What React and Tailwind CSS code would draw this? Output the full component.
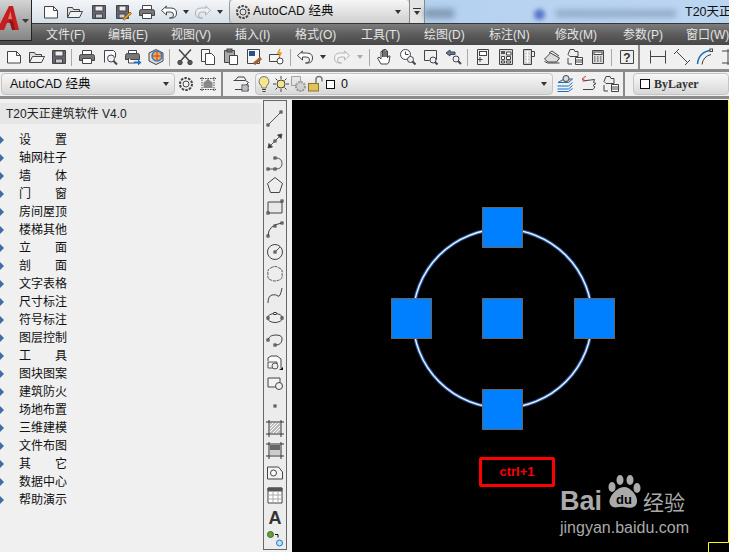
import React from 'react';

const CJK = "font-['Liberation_Sans','Noto_Sans_CJK_SC',sans-serif]";

const menus = [
  ['文件(F)', 62], ['编辑(E)', 63], ['视图(V)', 64], ['插入(I)', 60], ['格式(O)', 66],
  ['工具(T)', 63], ['绘图(D)', 65], ['标注(N)', 66], ['修改(M)', 68], ['参数(P)', 63], ['窗口(W)', 60],
];

const sideItems = [
  ['设', '置'], ['轴网柱子'], ['墙', '体'], ['门', '窗'], ['房间屋顶'], ['楼梯其他'], ['立', '面'], ['剖', '面'],
  ['文字表格'], ['尺寸标注'], ['符号标注'], ['图层控制'], ['工', '具'], ['图块图案'], ['建筑防火'], ['场地布置'],
  ['三维建模'], ['文件布图'], ['其', '它'], ['数据中心'], ['帮助演示'],
];

// every toolbar icon sits in an 18 unit box
function Ico({ children, size = 18 }) {
  return (
    <svg viewBox="0 0 18 18" width={size} height={size} fill="none" stroke="#444" strokeWidth="1" className="shrink-0">
      {children}
    </svg>
  );
}

const New = () => <Ico><path d="M2.500 3.500h9l4 4v7.500h-13z" fill="#fafafa" /><path d="M11.500 3.500v4h4" /></Ico>;
const Open = () => <Ico><path d="M1.500 14.500v-10h5l1 2h6v2" fill="#ddd" /><path d="M1.500 14.500l3-6h12l-3 6z" fill="#f2f2f2" /></Ico>;
const Save = () => <Ico><path d="M2.500 2.500h13v13h-13z" fill="#667" /><rect x="5" y="3" width="8" height="5" fill="#eee" /><rect x="5.500" y="11" width="7" height="4" fill="#ccc" /></Ico>;
const SaveAs = () => <Ico><path d="M2.500 2.500h12v13h-12z" fill="#667" /><rect x="5" y="3" width="7" height="5" fill="#eee" /><rect x="5" y="11" width="6" height="4" fill="#ccc" /><path d="M9 16l7-7 1.500 1.500-7 6.500z" fill="#e8a93a" stroke="#a06a10" /></Ico>;
const Print = () => <Ico><path d="M4.500 6.500v-4h9v4" fill="#fff" /><path d="M1.500 12.500v-4q0-2 2-2h11q2 0 2 2v4z" fill="#777" /><path d="M4.500 10.500h9v5h-9z" fill="#fff" /></Ico>;
const Preview = () => <Ico><path d="M3.500 14.500v-12h9l2 2v5" fill="#fafafa" /><circle cx="10" cy="10.500" r="3.500" fill="#eef" /><path d="M12.500 13l3.500 3.500" strokeWidth="2" /></Ico>;
const Plot = () => <Ico><path d="M4.500 5.500v-3h8v3" fill="#fff" /><path d="M1.500 11.500v-4q0-2 2-2h10q2 0 2 2v4z" fill="#777" /><path d="M4.500 10v5h6" fill="#fff" /><path d="M10 13.500h4v-2l3.500 3-3.500 3v-2h-4z" fill="#1b6fc0" stroke="none" /></Ico>;
const Publish = () => <Ico><path d="M9 1.500l7 3.500v8l-7 3.500-7-3.500v-8z" fill="#ddd" /><circle cx="10" cy="8" r="5" fill="#e9ad4a" stroke="#2a80c8" strokeWidth="1.500" /><path d="M10 3v10M5 8h10" stroke="#d33" /></Ico>;
const Cut = () => <Ico><path d="M3 1.500l10 11M15 1.500l-10 11" strokeWidth="1.500" /><circle cx="4" cy="14.500" r="2.200" fill="#555" /><circle cx="14" cy="14.500" r="2.200" fill="#555" /></Ico>;
const Copy = () => <Ico><path d="M2.500 1.500h8v12h-8z" fill="#fafafa" /><path d="M6.500 5.500h6l3 3v8h-9z" fill="#fff" /></Ico>;
const Paste = () => <Ico><path d="M2.500 2.500h10v12h-10z" fill="#aaa" /><rect x="5" y="1" width="5" height="3" fill="#777" /><path d="M7.500 7.500h8v9h-8z" fill="#fff" /></Ico>;
const Match = () => <Ico><path d="M2.500 1.500h12v14h-12z" fill="#f5f5f5" /><rect x="4" y="3" width="6" height="5" fill="#2c4f86" stroke="none" /><path d="M9 16l7-6" stroke="#a5602a" strokeWidth="3" /></Ico>;
const Block = () => <Ico><path d="M1.500 6.500h10v7h-10z" fill="#f5f5f5" /><circle cx="12" cy="13" r="3" fill="#fff" /><path d="M12 1l-2 4h3l-2 4" stroke="#e79a1d" strokeWidth="1.500" /></Ico>;
const Undo = () => <Ico><path d="M6.500 3l-5 4.500 5 4.500v-3h4q3 0 3 3t-3 3h-1 2q5 0 5-5t-6-5h-5z" fill="#fff" /></Ico>;
const Redo = () => <Ico><g opacity=".35"><path d="M11.500 3l5 4.500-5 4.500v-3h-4q-3 0-3 3t3 3h1-2q-5 0-5-5t6-5h5z" fill="#fff" /></g></Ico>;
const Caret = ({ light }) => <span className={`block w-0 h-0 mx-[4px] border-x-[3px] border-x-transparent border-t-[4px] ${light ? 'border-t-[#aaa]' : 'border-t-[#333]'}`} />;
const Pan = () => <Ico><path d="M5 16l-3.500-6 1.500-1 2 2V3.500h1.500V9 2h1.500v7-7.500H10V9V3h1.500v7l1-2h1.500l-1 6-1.500 2z" fill="#fff" /></Ico>;
const ZoomRt = () => <Ico><circle cx="6.500" cy="6.500" r="5" fill="#fff" /><path d="M6.500 3.500v3h3" /><circle cx="11.500" cy="11.500" r="3" fill="#eef" /><path d="M13.500 13.500l3 3" strokeWidth="2" /></Ico>;
const ZoomWin = () => <Ico><path d="M2.500 2.500h12v9" /><path d="M2.500 2.500v10h5" /><circle cx="11" cy="12" r="3" fill="#eef" /><path d="M13 14l2.500 2.500" strokeWidth="2" /></Ico>;
const ZoomPrev = () => <Ico><path d="M1 5l4-3v2h5v2.500H5V8z" fill="#5a7fa8" /><circle cx="11" cy="11" r="3" fill="#eef" /><path d="M13 13l3 3" strokeWidth="2" /></Ico>;
const Props = () => <Ico><path d="M3.500 1.500h11v15h-11z" fill="#eee" /><rect x="5.500" y="3.500" width="7" height="4" fill="#fff" /><path d="M3.500 11.500h5M6 9v5" /></Ico>;
const Center = () => <Ico><path d="M2.500 1.500h13v15h-13z" fill="#ddd" /><rect x="4" y="3" width="4" height="3" fill="#555" stroke="none" /><path d="M9.500 4h4.500v3h-4.500zM4.500 8.500h3v3h-3zM9.500 8.500h4v3h-4zM4.500 13h3v2h-3zM9.500 13h4v2h-4z" fill="#fff" /></Ico>;
const Palette = () => <Ico><path d="M3.500 1.500h8v15h-8z" fill="#ccc" /><path d="M11.500 3.500h3v5h-3z" fill="#eee" /><path d="M5 4h5M5 7h5M5 10h5M5 13h5M7.500 3v12" stroke="#fff" /></Ico>;
const Sheet = () => <Ico><path d="M1.500 11l6-6 9 5-3 4H5z" fill="#ddd" /><path d="M1.500 13.500l3 1.500h12" /><path d="M6 5l3-2 7 5" /></Ico>;
const Markup = () => <Ico><path d="M4 1.500h4l1 2h3v5H4l-2-2z" fill="#eee" /><path d="M2 10v6h4" /><path d="M9.500 9.500h7v7h-7z" fill="#fff" /><path d="M9.500 12h7M9.500 14h7" /></Ico>;
const Calc = () => <Ico><path d="M3.500 2.500h11v13h-11z" fill="#ddd" /><rect x="5" y="4" width="8" height="2.500" fill="#fff" /><path d="M5 9h8M5 11h8M5 13h8" strokeDasharray="1.500 1.500" /></Ico>;
const Help = () => <Ico><path d="M2.500 2.500h13v13h-13z" fill="#eee" /><text x="9" y="14" textAnchor="middle" fontSize="12" fontWeight="700" fill="#333" stroke="none" fontFamily="Liberation Sans">?</text></Ico>;
const DimLin = () => <Ico><path d="M1.500 2.500v13M16.500 2.500v13M1.500 8.500h15" /></Ico>;
const DimAli = () => <Ico><path d="M1 6l5-5M12 17l5-5M3.500 3.500l11 11" /></Ico>;
const DimArc = () => <Ico><path d="M1.500 16q1-12 14-14" stroke="#1b6fc0" strokeWidth="1.500" /><path d="M6 16.500q1-8 9-10" /><rect x="14" y="1" width="2.500" height="2.500" fill="#fff" /></Ico>;
const DimOrd = () => <Ico><path d="M9 1v16M3 3h12M3 15h12" /></Ico>;

const Gear = () => <Ico><circle cx="9" cy="9" r="3" /><circle cx="9" cy="9" r="6" strokeDasharray="2.500 1.200" strokeWidth="2" /></Ico>;
const WsIcon = () => <Ico><path d="M3 2v14M15 2v14M1 3.500h16M1 14.500h16" strokeDasharray="1.500 1" /><path d="M4.500 13V7.500L9 4l4.500 3.500V13z" fill="#888" stroke="none" /></Ico>;
const LayerMgr = () => <Ico><path d="M1.500 5.500h12l3 2-2 2 2 1.500-2 2 2 1.500H3" /><path d="M3 5.500l3-3.500h6l2 3" /><rect x="10" y="10" width="6" height="6" fill="#fff" /><path d="M11 12h4M11 14h4" stroke="#6a7f9b" /></Ico>;
const Bulb = () => <Ico><path d="M9 1.500a5 5 0 0 1 3 9l-1 2.500H7l-1-2.500a5 5 0 0 1 3-9z" fill="#f6e58c" stroke="#777" /><path d="M7 14.500h4M7.500 16.500h3" /></Ico>;
const Sun = () => <Ico><circle cx="9" cy="9" r="4" fill="#f6e58c" /><path d="M9 1v3M9 14v3M1 9h3M14 9h3M3.500 3.500l2 2M12.500 12.500l2 2M14.500 3.500l-2 2M5.500 12.500l-2 2" /></Ico>;
const Viewport = () => <Ico><g opacity=".45"><path d="M2.500 1.500h9v9h-9z" fill="#ddd" /><circle cx="11.500" cy="11.500" r="4.500" fill="#bbb" strokeDasharray="2 1" strokeWidth="2" /></g></Ico>;
const Lock = () => <Ico><rect x="1.500" y="8.500" width="10" height="7.500" fill="#e0c15a" stroke="#8a7426" /><path d="M9 8.500V4.500a3 3 0 0 1 6 0v2" strokeWidth="1.500" stroke="#777" /></Ico>;
const LayerState = () => <Ico><path d="M2.500 6l12-1.500-1 3 2.500 1-3 2 2 1.500-2 2.500H3" /><path d="M6 1L2 4l4 2" stroke="#c33" /></Ico>;
const LayerCur = () => <Ico><path d="M2 7.500l6-3.500h8.500l-4 3.500z" fill="#f2d2ae" stroke="#1b6fc0" /><path d="M1.500 11h11l4-3.500M1.500 14h11l4-3.500M1.500 16.500h11l4-3" stroke="#1b6fc0" /><circle cx="10" cy="3.500" r="3" fill="#ddd" /></Ico>;

const VI = ({ children }) => (
  <svg viewBox="0 0 18 18" width="18" height="18" fill="none" stroke="#555" strokeWidth="1" className="block">{children}</svg>
);
const Nd = ({ x, y, s = 2 }) => <rect x={x - s / 2} y={y - s / 2} width={s} height={s} fill="#fff" stroke="#333" />;

// the draw bar, top to bottom
const drawIcons = [
  <VI><path d="M2 15L15 2" /><Nd x={2} y={15} /><Nd x={15} y={2} /></VI>,
  <VI><path d="M2 16L16 2" /><path d="M16 2l-4.500 1 3.500 3.500z" fill="#333" /><path d="M2 16l4.500-1-3.500-3.500z" fill="#333" /><Nd x={9} y={9} /></VI>,
  <VI><path d="M2 15h8q6 0 6-5.500T10 4" /><Nd x={2} y={15} /><Nd x={9} y={15} /><Nd x={9} y={4} /></VI>,
  <VI><path d="M9 1.500l7.500 6-3 9h-9l-3-9z" fill="#eee" stroke="#444" /></VI>,
  <VI><path d="M2 4h14v11H2z" fill="#e8e8e8" stroke="#444" /><Nd x={16} y={3} /><Nd x={2} y={15} /></VI>,
  <VI><path d="M2 16q0-11 14-13" stroke="#444" /><Nd x={2} y={16} /><Nd x={9} y={6} /><Nd x={16} y={3} /></VI>,
  <VI><circle cx="9" cy="9" r="7.500" fill="#eee" stroke="#444" /><path d="M9 9l5-5" /><Nd x={9} y={9} /></VI>,
  <VI><path d="M5 3q4-3 8 0 4 1 3 6 1 5-3 6-4 2-8 0-4-1-3-6-1-5 3-6z" fill="#eee" strokeDasharray="3 .8" /></VI>,
  <VI><path d="M2 16q0-7 4-8t6 1 4-8" stroke="#444" /></VI>,
  <VI><ellipse cx="9" cy="9" rx="7.500" ry="4.500" fill="#eee" stroke="#444" /><Nd x={9} y={4.500} /><Nd x={2} y={9} /><Nd x={16} y={9} /></VI>,
  <VI><path d="M2 9q1-5 8-5t6 5-6 5" stroke="#444" /><Nd x={2} y={9} /><Nd x={9} y={14} /></VI>,
  <VI><path d="M2 8V5l3-2h6l4 3v9" stroke="#444" fill="#fafafa" /><path d="M2 9h9v6H2z" fill="#f2f2f2" /><circle cx="9" cy="13" r="3" fill="#eee" /><path d="M13 17l4-3v3z" fill="#111" stroke="none" /></VI>,
  <VI><path d="M2 3h12v9H2z" fill="#f2f2f2" stroke="#444" /><circle cx="13" cy="11" r="3.500" fill="#eee" stroke="#444" /></VI>,
  <VI><Nd x={9} y={9} s={2} /></VI>,
  <VI><path d="M3 1v17M15 1v17M0 3h18M0 15h18" stroke="#333" /><path d="M4 4h10v10H4z" fill="#bbb" stroke="none" /><path d="M4 7l3-3M4 10l6-6M4 13l9-9M7 14l7-7M10 14l4-4" stroke="#fff" /></VI>,
  <VI><path d="M3 1v17M15 1v17M0 3h18M0 15h18" stroke="#333" /><path d="M4 4h10v10H4z" fill="#666" stroke="none" /><path d="M4 9h10v5H4z" fill="#ccc" stroke="none" /></VI>,
  <VI><path d="M1.500 3h11l4 5v7h-15z" fill="#f2f2f2" stroke="#444" /><circle cx="7.500" cy="9" r="3" fill="#fff" stroke="#444" /></VI>,
  <VI><path d="M2 2h14v15H2z" fill="#fff" stroke="#444" /><path d="M2 2h14v3H2z" fill="#555" /><path d="M2 9h14M2 13h14M7 5v12M12 5v12" stroke="#aaa" /></VI>,
  <VI><text x="9" y="16" textAnchor="middle" fontSize="18" fontWeight="700" fill="#333" stroke="none" fontFamily="Liberation Sans">A</text></VI>,
  <VI><circle cx="4.500" cy="4.500" r="3" fill="#62a13a" stroke="#3d6b22" /><path d="M9 4.500h3v3" stroke="#111" /><circle cx="13.500" cy="13" r="3" fill="#bfe0f7" stroke="#1b78c8" /></VI>,
];

function Sep() {
  return <span className="w-[1px] h-[17px] bg-[#a8a8a8] ml-[2px] mr-[3px] shrink-0" />;
}

function Cell({ children, w = 'w-[23px]' }) {
  return <span className={`${w} h-[20px] flex items-center justify-center shrink-0`}>{children}</span>;
}

function Grip({ x }) {
  return <span className={`w-[2px] self-stretch bg-[#8a8a8a] shrink-0 ${x}`} />;
}

export default function App() {
  return (
    <div className={`w-[729px] h-[552px] overflow-hidden relative flex flex-col bg-[#f0f0f0] ${CJK}`}>
      {/* app button */}
      <div className="absolute left-0 top-0 w-[32px] h-[41px] z-10 bg-gradient-to-b from-[#d4d4d4] to-[#858585] border-r border-b border-[#222]">
        <svg viewBox="0 0 31 40" width="31" height="40" className="block">
          <path d="M-3 30L9 6h4l6 24h-5l-1.500-7H7l-3 7z" fill="#c41e20" />
          <path d="M8 19h4l-1.500-8z" fill="#e07a7a" />
          <path d="M12 30l-3-10 4 1 2 9z" fill="#8e1416" />
          <path d="M22 19h7l-3.500 4z" fill="#3a3a3a" />
        </svg>
      </div>

      {/* title bar */}
      <div className="h-[24px] shrink-0 relative flex items-stretch bg-gradient-to-r from-[#a9cbec] to-[#bcd6f2] border-b border-[#33373b]">
        <div className="ml-[32px] w-[197px] flex items-center pl-[7px] bg-gradient-to-b from-[#f4f6f8] to-[#d6dfe8]">
          <Cell w="w-[24px]"><New /></Cell>
          <Cell w="w-[24px]"><Open /></Cell>
          <Cell w="w-[24px]"><Save /></Cell>
          <Cell w="w-[24px]"><SaveAs /></Cell>
          <Cell w="w-[24px]"><Print /></Cell>
          <Cell w="w-[20px]"><Undo /></Cell>
          <Caret />
          <Cell w="w-[20px]"><Redo /></Cell>
          <Caret />
        </div>
        <div className="w-[180px] flex items-center px-[4px] bg-gradient-to-b from-[#f6f6f6] to-[#cfcfcf] border-l border-[#999] rounded-sm">
          <Gear />
          <span className="ml-[1px] text-[12.500px] text-[#111] whitespace-nowrap">AutoCAD 经典</span>
          <span className="ml-auto"><Caret /></span>
        </div>
        <div className="w-[16px] flex flex-col items-center justify-center gap-[2px] bg-[#e4e4e4] border-x border-[#888]">
          <span className="w-[8px] h-[1px] bg-[#333]" />
          <Caret />
        </div>
        <div className="absolute left-[424px] top-[9px] w-[30px] h-[9px] bg-[#7f97b2] blur-[3px]" />
        <div className="absolute left-[534px] top-[9px] w-[11px] h-[11px] rounded-full bg-[#5a78c8] blur-[2px]" />
        <div className="absolute left-[556px] top-[10px] w-[120px] h-[7px] bg-[#8ea7c4] blur-[3px]" />
        <span className="absolute left-[685px] top-[3px] text-[12.500px] text-[#111] whitespace-nowrap">T20天正</span>
      </div>

      {/* menu bar */}
      <div className="h-[21px] shrink-0 flex items-center pl-[46px] bg-gradient-to-b from-[#7c7c7c] via-[#5c5c5c] to-[#474747] text-[12px] text-[#e4e4e4] whitespace-nowrap">
        {menus.map(([t, w]) => (
          <span key={t} style={{ width: w }} className="shrink-0">{t}</span>
        ))}
      </div>

      {/* standard toolbar */}
      <div className="h-[27px] shrink-0 flex items-center pl-[2px] bg-[#f0f0f0] border-b-[3px] border-[#8a8a8a]">
        <Cell><New /></Cell><Cell w="w-[24px]"><Open /></Cell><Cell w="w-[20px]"><Save /></Cell>
        <Sep />
        <Cell><Print /></Cell><Cell><Preview /></Cell><Cell><Plot /></Cell><Cell><Publish /></Cell>
        <Sep />
        <Cell><Cut /></Cell><Cell><Copy /></Cell><Cell><Paste /></Cell><Cell><Match /></Cell><Cell><Block /></Cell>
        <Sep />
        <Cell w="w-[22px]"><Undo /></Cell><Caret /><Cell><Redo /></Cell><Caret light />
        <Sep />
        <Cell><Pan /></Cell><Cell><ZoomRt /></Cell><Cell><ZoomWin /></Cell><Cell><ZoomPrev /></Cell>
        <Sep />
        <Cell><Props /></Cell><Cell><Center /></Cell><Cell><Palette /></Cell><Cell><Sheet /></Cell><Cell><Markup /></Cell><Cell><Calc /></Cell>
        <Sep />
        <Cell><Help /></Cell>
        <Grip x="mr-[6px]" />
        <Cell w="w-[24px]"><DimLin /></Cell><Cell><DimAli /></Cell><Cell><DimArc /></Cell><Cell><DimOrd /></Cell>
      </div>

      {/* workspace + layer toolbar */}
      <div className="h-[27px] shrink-0 flex items-center bg-[#f0f0f0] border-b-[3px] border-[#8a8a8a]">
        <div className="ml-[1px] w-[174px] h-[22px] flex items-center pl-[8px] pr-[1px] rounded-sm bg-gradient-to-b from-[#f8f8f8] to-[#d8d8d8] border border-[#c4c4c4] text-[12.500px] text-[#111] whitespace-nowrap">
          AutoCAD 经典
          <span className="ml-auto"><Caret /></span>
        </div>
        <Cell w="w-[22px]"><Gear /></Cell>
        <Cell w="w-[22px]"><WsIcon /></Cell>
        <Grip x="ml-[2px]" />
        <Cell w="w-[32px] pl-[4px]"><LayerMgr /></Cell>
        <div className="w-[298px] h-[22px] flex items-center pr-[1px] rounded-sm bg-gradient-to-b from-[#f8f8f8] to-[#d8d8d8] border border-[#c4c4c4] text-[12.500px] text-[#111]">
          <Cell w="w-[16px]"><Bulb /></Cell>
          <Cell w="w-[17px]"><Sun /></Cell>
          <Cell w="w-[17px]"><Viewport /></Cell>
          <Cell w="w-[19px]"><Lock /></Cell>
          <span className="ml-[1px] w-[9px] h-[9px] bg-white border border-[#111]" />
          <span className="ml-[6px]">0</span>
          <span className="ml-auto"><Caret /></span>
        </div>
        <Cell w="w-[24px]"><LayerCur /></Cell>
        <Cell w="w-[23px]"><LayerState /></Cell>
        <Cell w="w-[22px]"><Markup /></Cell>
        <Grip x="ml-[1px]" />
        <div className="ml-[8px] flex-1 h-[22px] flex items-center pl-[6px] rounded-sm bg-gradient-to-b from-[#f8f8f8] to-[#d8d8d8] border border-[#c4c4c4]">
          <span className="w-[10px] h-[10px] bg-white border border-[#111]" />
          <span className="ml-[4px] font-['Liberation_Serif',serif] text-[12px] font-semibold text-[#333]">ByLayer</span>
        </div>
      </div>

      {/* main */}
      <div className="flex-1 min-h-0 flex pt-[1px]">
        <aside className="w-[261px] shrink-0 pt-[3px]">
          <div className="h-[21px] flex items-center pl-[6px] bg-[#e6e6e6] rounded-tr-sm text-[12px] text-[#222]">T20天正建筑软件 V4.0</div>
          <ul className="mt-[7px] text-[12px] leading-[18px] text-[#111]">
            {sideItems.map((it, i) => (
              <li key={i} className="flex items-center h-[18px]">
                <span className="w-0 h-0 border-y-[4px] border-y-transparent border-l-[4px] border-l-[#3a6ea5]" />
                <span className="ml-[15px] w-[48px] flex justify-between">
                  {it.length > 1 ? <><span>{it[0]}</span><span>{it[1]}</span></> : it[0]}
                </span>
              </li>
            ))}
          </ul>
        </aside>

        <div className="ml-[2px] w-[24px] shrink-0 mb-[2px] flex flex-col items-center pt-[9px] gap-[4.100px] border border-[#666] bg-[#ececec]">
          {drawIcons.map((ic, i) => <span key={i} className="block h-[18px]">{ic}</span>)}
        </div>

        {/* model space */}
        <div className="ml-[5px] flex-1 relative bg-black overflow-hidden">
          <svg className="absolute inset-0" width="437" height="452" viewBox="292 100 437 452">
            <circle cx="502.500" cy="318.500" r="89.500" fill="none" stroke="#2a5fa8" strokeWidth="3.500" />
            <circle cx="502.500" cy="318.500" r="89.500" fill="none" stroke="#f2f6ff" strokeWidth="1.300" />
            {[[482, 207], [391, 298], [482, 298], [574, 298], [482, 389]].map(([x, y]) => (
              <rect key={`${x}-${y}`} x={x + 0.5} y={y + 0.5} width="40" height="40" fill="#0080ff" stroke="#666" />
            ))}
            <path d="M708.500 552v-9.500h20V100" stroke="#ff0" fill="none" />
          </svg>

          <div className="absolute left-[187px] top-[357px] w-[76px] h-[30px] flex items-center justify-center border-[3px] border-[#f00] rounded-[2px] text-[13px] font-bold text-[#f00] font-['Liberation_Sans',sans-serif]">
            ctrl+1
          </div>

          {/* watermark */}
          <div className="absolute left-[268px] top-[374px] w-[132px] h-[62px] text-[#aaa]">
            <span className="absolute left-0 top-[12px] text-[27px] leading-[30px] font-bold font-['Liberation_Sans',sans-serif]">Bai</span>
            <svg className="absolute left-[44px] top-0" width="40" height="40" viewBox="0 0 40 40" fill="#aaa">
              <ellipse cx="8" cy="13" rx="3.500" ry="5" />
              <ellipse cx="16" cy="6" rx="3.500" ry="5" />
              <ellipse cx="26" cy="6" rx="3.500" ry="5" />
              <ellipse cx="33" cy="14" rx="3.500" ry="5" />
              <path d="M20 13c6 0 14 8 13 15s-8 6-13 5-11 3-14-3 7-17 14-17z" />
              <text x="20" y="30" textAnchor="middle" fontSize="13" fontWeight="700" fill="#000" fontFamily="Liberation Sans">du</text>
            </svg>
            <span className="absolute left-[83px] top-[17px] text-[21px] leading-[24px] whitespace-nowrap">经验</span>
            <span className="absolute left-0 top-[45px] text-[16px] leading-[17px] whitespace-nowrap font-['Liberation_Sans',sans-serif]">jingyan.baidu.com</span>
          </div>
        </div>
      </div>
    </div>
  );
}
